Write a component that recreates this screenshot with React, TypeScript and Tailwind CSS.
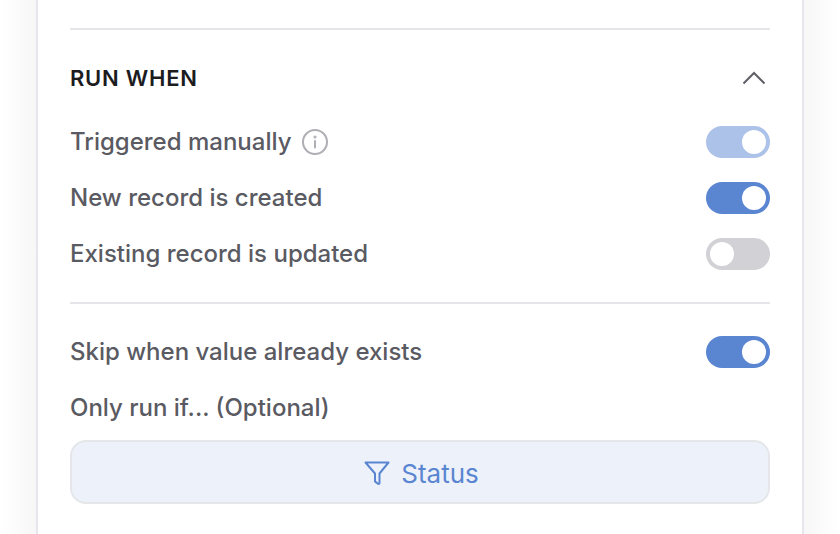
import React from "react";

function Toggle({ state }: { state: "on" | "off" | "disabled" }) {
  const bg =
    state === "on" ? "bg-[#5a85d1]" : state === "disabled" ? "bg-[#adc2e8]" : "bg-[#d2d2d6]";
  const just = state === "off" ? "justify-start" : "justify-end";
  return (
    <div className={`flex h-8 w-16 items-center rounded-full p-1 ${bg} ${just}`}>
      <div className="h-6 w-6 rounded-full bg-white" />
    </div>
  );
}

function Row({ label, children, icon }: { label: string; children?: React.ReactNode; icon?: React.ReactNode }) {
  return (
    <div className="flex h-8 items-center justify-between">
      <div className="flex items-center gap-[11px] text-[24px] font-medium text-[#5a5a62]">
        <span>{label}</span>
        {icon}
      </div>
      {children}
    </div>
  );
}

export default function App() {
  return (
    <div
      className="h-[534px] w-[840px] overflow-hidden bg-[linear-gradient(to_right,#ffffff_0px,#f7f7f7_36px,#f7f7f7_804px,#ffffff_840px)] px-9"
      style={{ fontFamily: "Inter, 'Liberation Sans', sans-serif" }}
    >
      <div className="h-full border-x-2 border-[#e6e6ec] bg-white px-8 pt-7">
        <div className="h-0.5 bg-[#e6e6ea]" />
        <div className="mt-[34px] flex h-7 items-center justify-between">
          <h2 className="text-[22px] font-semibold tracking-[0.75px] text-[#1c1c1f]">RUN WHEN</h2>
          <svg width="24" height="14" viewBox="0 0 24 14" fill="none" className="mr-[4px]" stroke="#5f5f66" strokeWidth="2">
            <path d="M1.5 12.5 12 2l10.5 10.5" />
          </svg>
        </div>
        <div className="mt-[34px] flex flex-col gap-6">
          <Row
            label="Triggered manually"
            icon={
              <svg width="26" height="26" viewBox="0 0 26 26" fill="none" stroke="#aeaeb5" strokeWidth="2" strokeLinecap="round">
                <circle cx="13" cy="13" r="12" />
                <path d="M13 12v6.5" />
                <circle cx="13" cy="8" r="0.6" />
              </svg>
            }
          >
            <Toggle state="disabled" />
          </Row>
          <Row label="New record is created">
            <Toggle state="on" />
          </Row>
          <Row label="Existing record is updated">
            <Toggle state="off" />
          </Row>
        </div>
        <div className="mt-8 h-0.5 bg-[#e6e6ea]" />
        <div className="mt-8 flex flex-col gap-6">
          <Row label="Skip when value already exists">
            <Toggle state="on" />
          </Row>
          <Row label="Only run if... (Optional)" />
        </div>
        <button className="mt-4 flex h-16 w-full items-center justify-center gap-[11px] rounded-2xl border-2 border-[#e5e6ea] bg-[#edf2fa] pl-[3px] text-[26px] font-normal text-[#5a85d1]">
          <svg width="26" height="26" viewBox="0 0 26 26" fill="none" stroke="#5a85d1" strokeWidth="2" strokeLinejoin="round" className="translate-y-px">
            <path d="M1.5 2.5h23l-9 11V23a1 1 0 0 1-1.6.8l-2.4-1.9a1 1 0 0 1-.5-.8v-7.6z" />
          </svg>
          <span className="pt-[3px]">Status</span>
        </button>
      </div>
    </div>
  );
}
